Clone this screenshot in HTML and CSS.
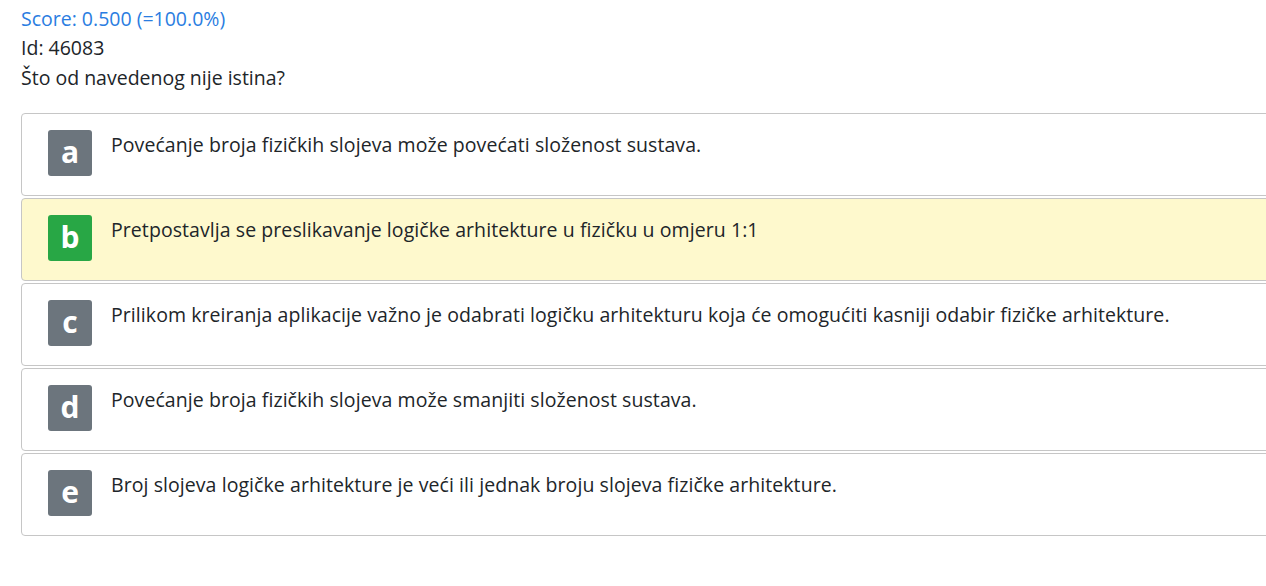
FILE: index.html
```html
<!DOCTYPE html>
<html>
<head>
<meta charset="utf-8">
<link rel="stylesheet" href="styles.css">
</head>
<body>
<div class="page">
  <div class="score">Score: 0.500 (=100.0%)</div>
  <div class="meta">Id: 46083</div>
  <div class="question">Što od navedenog nije istina?</div>
  <div class="answers">
    <div class="answer"><span class="badge">a</span><span class="text">Povećanje broja fizičkih slojeva može povećati složenost sustava.</span></div>
    <div class="answer correct"><span class="badge green">b</span><span class="text">Pretpostavlja se preslikavanje logičke arhitekture u fizičku u omjeru 1:1</span></div>
    <div class="answer"><span class="badge">c</span><span class="text">Prilikom kreiranja aplikacije važno je odabrati logičku arhitekturu koja će omogućiti kasniji odabir fizičke arhitekture.</span></div>
    <div class="answer"><span class="badge">d</span><span class="text">Povećanje broja fizičkih slojeva može smanjiti složenost sustava.</span></div>
    <div class="answer"><span class="badge">e</span><span class="text">Broj slojeva logičke arhitekture je veći ili jednak broju slojeva fizičke arhitekture.</span></div>
  </div>
</div>
</body>
</html>
```
FILE: styles.css
```css
html, body {
  margin: 0;
  padding: 0;
  background: #fff;
  overflow: hidden;
}
body {
  font-family: "Open Sans", "Noto Sans", sans-serif;
  font-size: 19.5px;
  color: #212529;
}
.page {
  padding: 4px 0 0 21px;
  width: 1260px;
}
.score {
  color: #2a7de1;
  line-height: 29px;
}
.meta {
  line-height: 29px;
}
.question {
  line-height: 32px;
  margin-bottom: 19px;
}
.answers {
  display: flex;
  flex-direction: column;
  gap: 2px;
}
.answer {
  display: flex;
  align-items: flex-start;
  gap: 19px;
  border: 1px solid #c6c6c6;
  border-radius: 4px;
  padding: 16px 0 19px 26px;
  background: #fff;
}
.answer.correct {
  background: #fef9cd;
}
.badge {
  flex: none;
  width: 44px;
  height: 46px;
  border-radius: 3px;
  background: #6c757d;
  color: #fff;
  font-weight: 700;
  font-size: 30px;
  line-height: 44px;
  text-align: center;
}
.badge.green {
  background: #28a745;
}
.text {
  line-height: 30px;
  letter-spacing: 0.07px;
}
```
